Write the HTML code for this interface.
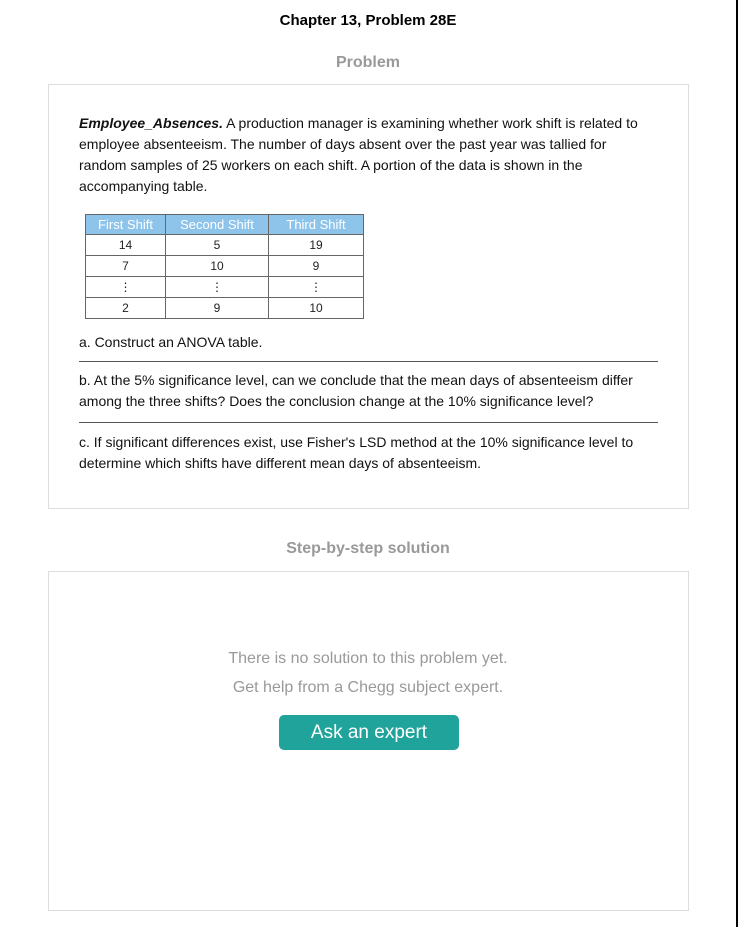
<!DOCTYPE html>
<html><head><meta charset="utf-8"><style>
*{margin:0;padding:0;box-sizing:border-box}
body{width:738px;height:927px;background:#fff;font-family:"Liberation Sans",sans-serif;position:relative;overflow:hidden}
.edge{position:absolute;right:0;top:0;width:2px;height:927px;background:#000}
h1{position:absolute;top:12px;left:0;width:736px;text-align:center;font-size:15px;font-weight:bold;color:#000}
.sec{position:absolute;left:0;width:736px;text-align:center;font-size:16px;font-weight:bold;color:#999}
.box{position:absolute;left:48px;width:641px;border:1px solid #ddd}
p.t{position:absolute;left:79px;width:600px;font-size:14px;line-height:21px;color:#111;white-space:nowrap}
.hr{position:absolute;left:79px;width:579px;height:1px;background:#555}
table{position:absolute;left:85px;top:214px;border-collapse:collapse;font-family:"Liberation Sans",sans-serif;font-size:12px}
td{border:1px solid #666;text-align:center;height:21px;color:#222}
th{background:#8ec4ea;color:#fff;font-weight:normal;height:20px;border:1px solid #666;font-size:13px}
.btn{position:absolute;left:279px;top:715px;width:180px;height:35px;background:#20a39a;border-radius:5px;color:#fff;font-size:19px;text-align:center;line-height:35px;font-family:"Liberation Sans",sans-serif}
.g{position:absolute;left:0;width:736px;text-align:center;font-size:16px;color:#999}
</style></head><body>
<div class="edge"></div>
<h1>Chapter 13, Problem 28E</h1>
<div class="sec" style="top:54px">Problem</div>
<div class="box" style="top:84px;height:425px"></div>
<p class="t" style="top:113px"><b><i>Employee_Absences.</i></b> A production manager is examining whether work shift is related to<br>employee absenteeism. The number of days absent over the past year was tallied for<br>random samples of 25 workers on each shift. A portion of the data is shown in the<br>accompanying table.</p>
<table>
<tr><th style="width:80px">First Shift</th><th style="width:103px">Second Shift</th><th style="width:95px">Third Shift</th></tr>
<tr><td>14</td><td>5</td><td>19</td></tr>
<tr><td>7</td><td>10</td><td>9</td></tr>
<tr><td>⋮</td><td>⋮</td><td>⋮</td></tr>
<tr><td>2</td><td>9</td><td>10</td></tr>
</table>
<p class="t" style="top:332px">a. Construct an ANOVA table.</p>
<div class="hr" style="top:361px"></div>
<p class="t" style="top:370px">b. At the 5% significance level, can we conclude that the mean days of absenteeism differ<br>among the three shifts? Does the conclusion change at the 10% significance level?</p>
<div class="hr" style="top:422px"></div>
<p class="t" style="top:432px">c. If significant differences exist, use Fisher's LSD method at the 10% significance level to<br>determine which shifts have different mean days of absenteeism.</p>
<div class="sec" style="top:540px">Step-by-step solution</div>
<div class="box" style="top:571px;height:340px"></div>
<div class="g" style="top:650px">There is no solution to this problem yet.</div>
<div class="g" style="top:679px">Get help from a Chegg subject expert.</div>
<div class="btn">Ask an expert</div>
</body></html>
